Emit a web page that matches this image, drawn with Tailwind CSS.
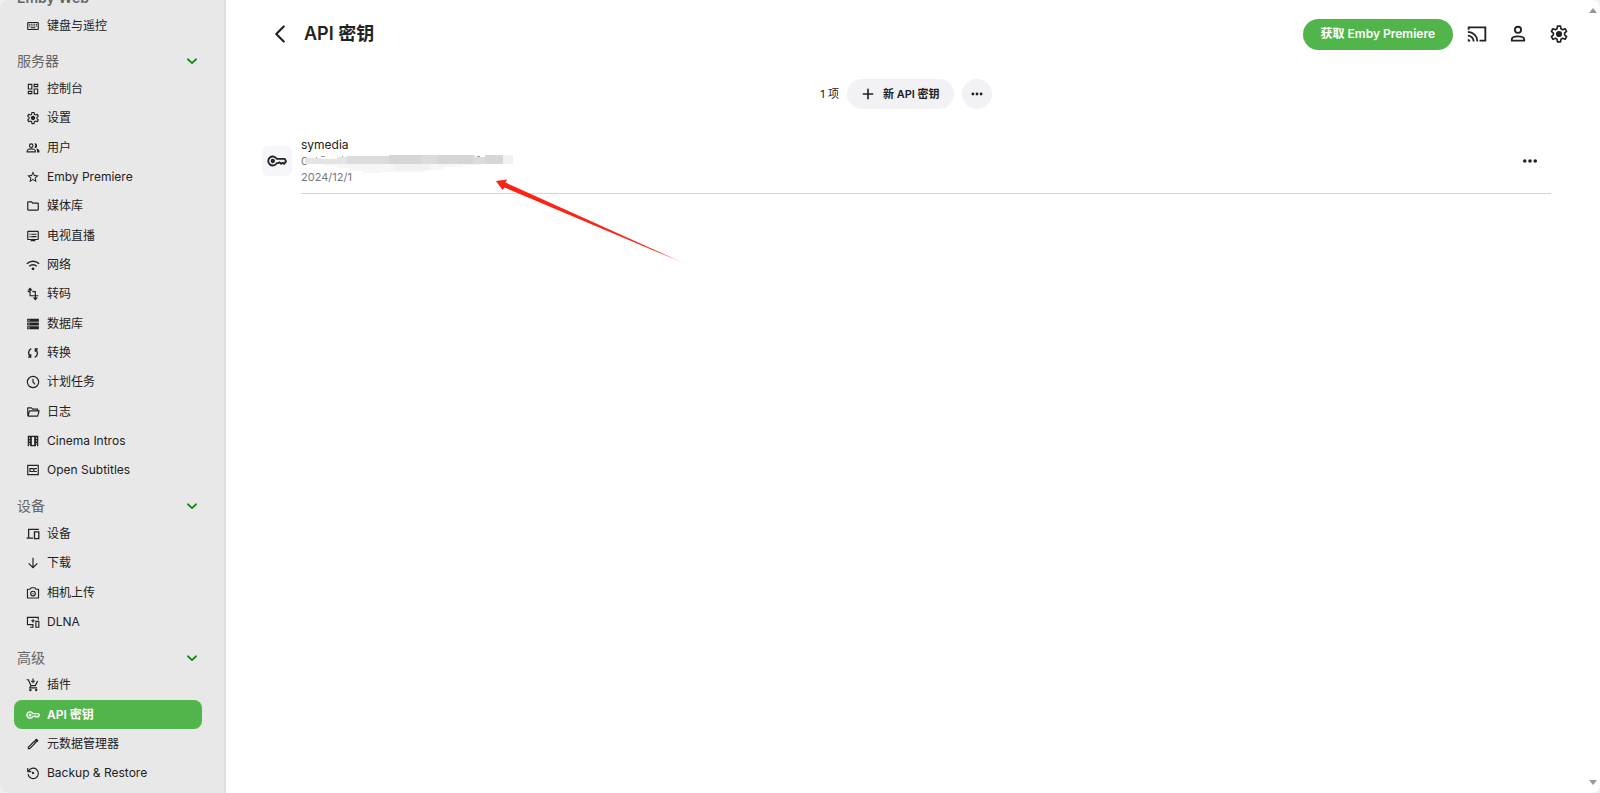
<!DOCTYPE html>
<html lang="zh-CN">
<head>
    <meta charset="UTF-8">
    <meta name="viewport" content="width=device-width, initial-scale=1.0">
    <title>API 密钥</title>
    <script src="https://cdn.jsdelivr.net/npm/@tailwindcss/browser@4"></script>
</head>
<body class="bg-[#f0f0f0] font-['Inter','Noto_Sans_CJK_SC',sans-serif] text-[#222]">

    <!-- Icons -->
    <svg class="hidden" xmlns="http://www.w3.org/2000/svg">
        <symbol id="keyboard" viewBox="0 0 24 24"><path d="M20 7v10H4V7h16m0-2H4c-1.1 0-1.99.9-1.99 2L2 17c0 1.1.9 2 2 2h16c1.1 0 2-.9 2-2V7c0-1.1-.9-2-2-2zm-9 3h2v2h-2zm0 3h2v2h-2zM8 8h2v2H8zm0 3h2v2H8zm-3 0h2v2H5zm0-3h2v2H5zm3 6h8v2H8zm6-3h2v2h-2zm0-3h2v2h-2zm3 3h2v2h-2zm0-3h2v2h-2z"/></symbol>
        <symbol id="dashboard" viewBox="0 0 24 24"><path d="M19 5v2h-4V5h4M9 5v6H5V5h4m10 8v6h-4v-6h4M9 17v2H5v-2h4M21 3h-8v6h8V3zM11 3H3v10h8V3zm10 8h-8v10h8V11zm-10 4H3v6h8v-6z"/></symbol>
        <symbol id="settings" viewBox="0 0 24 24"><path fill="none" stroke="currentColor" stroke-width="2" stroke-linejoin="round" d="M10.2 2.500h3.600l.6 3.200 1.900 1.100 3-1.100 1.800 3.100-2.400 2.200v2l2.400 2.200-1.800 3.100-3-1.100-1.900 1.100-.6 3.200h-3.600l-.6-3.200-1.900-1.100-3 1.100-1.800-3.100L5.300 13v-2L2.900 8.800l1.800-3.100 3 1.100 1.900-1.100z"/><circle cx="12" cy="12" r="3.700"/></symbol>
        <symbol id="people" viewBox="0 0 24 24"><g fill="none" stroke="currentColor" stroke-width="2"><circle cx="9" cy="8" r="3"/><path d="M2 18.500v-1.500c0-2.300 4.500-3.500 7-3.500s7 1.200 7 3.500v1.500z"/></g><path d="M14.500 4.200c2.500-.8 4.500 1.300 4.500 3.800s-2 4.600-4.500 3.800c1.800-2.300 1.800-5.300 0-7.600zM17 12.900c3 .6 6 2 6 4.100v2.500h-4V17c0-1.600-.8-3-2-4.100z"/></symbol>
        <symbol id="star" viewBox="0 0 24 24"><path d="M22 9.240l-7.190-.62L12 2 9.190 8.630 2 9.240l5.460 4.730L5.820 21 12 17.270 18.180 21l-1.630-7.030L22 9.240zM12 15.400l-3.760 2.270 1-4.280-3.320-2.880 4.380-.38L12 6.100l1.710 4.040 4.380.38-3.320 2.880 1 4.280L12 15.400z"/></symbol>
        <symbol id="folder" viewBox="0 0 24 24"><path d="M9.170 6l2 2H20v10H4V6h5.170M10 4H4c-1.100 0-1.990.9-1.990 2L2 18c0 1.100.9 2 2 2h16c1.100 0 2-.9 2-2V8c0-1.100-.9-2-2-2h-8l-2-2z"/></symbol>
        <symbol id="tv" viewBox="0 0 24 24"><path d="M20 3H4c-1.100 0-2 .9-2 2v12c0 1.100.9 2 2 2h4v2h8v-2h4c1.100 0 2-.9 2-2V5c0-1.100-.9-2-2-2zm0 14H4V5h16v12zm-2-9H9v2h9V8zm0 4H9v2h9v-2zM8 8H6v2h2V8zm0 4H6v2h2v-2z"/></symbol>
        <symbol id="wifi" viewBox="0 0 24 24"><path fill="none" stroke="currentColor" stroke-width="2.600" d="M1.500 9.800a15 15 0 0 1 21 0M5.600 14.200a9.200 9.200 0 0 1 12.800 0"/><circle cx="12" cy="18.500" r="2.400"/></symbol>
        <symbol id="transform" viewBox="0 0 24 24"><path fill="none" stroke="currentColor" stroke-width="2" d="M7 3v12h14M3 8h4M11 8h5v12"/><path d="M7 1l4.500 5h-9zM16 23l4.500-5h-9z"/></symbol>
        <symbol id="storage" viewBox="0 0 24 24"><path d="M2 21h20v-5H2v5zm2-3.500h2v2H4v-2zM2 3v5h20V3H2zm4 3.500H4v-2h2v2zm-4 8h20v-5H2v5zM4 11h2v2H4v-2z"/></symbol>
        <symbol id="sync" viewBox="0 0 24 24"><path fill="none" stroke="currentColor" stroke-width="2.400" d="M9 4.500C3.500 7 3 14 7.500 18.500M3.500 19H8v-5M15 19.500c5.500-2.500 6-9.500 1.500-14M20.500 5H16v5"/></symbol>
        <symbol id="clock" viewBox="0 0 24 24"><g fill="none" stroke="currentColor" stroke-width="2"><circle cx="12" cy="12" r="9.700"/><path d="M12 6.500V12l3.500 4"/></g></symbol>
        <symbol id="folder-open" viewBox="0 0 24 24"><path fill="none" stroke="currentColor" stroke-width="2" stroke-linejoin="round" d="M3 18.500V5h6.500l2 2H20v3M3.500 19 6 10h16.500L20 19z"/></symbol>
        <symbol id="film" viewBox="0 0 24 24"><path fill-rule="evenodd" d="M3 3h18v18h-2v-2h-2v2H7v-2H5v2H3zM5 6v2h2V6zm0 5v2h2v-2zm0 5v2h2v-2zM17 6v2h2V6zm0 5v2h2v-2zm0 5v2h2v-2zM10 5v14h4V5z"/></symbol>
        <symbol id="cc" viewBox="0 0 24 24"><path fill="none" stroke="currentColor" stroke-width="2" d="M3 4h18v16H3zM11 10.500V9.500H6.800v5H11v-1M17.500 10.500V9.500h-4.200v5h4.200v-1"/></symbol>
        <symbol id="devices" viewBox="0 0 24 24"><path fill="none" stroke="currentColor" stroke-width="2.200" d="M22 4H4.500v15M1 19h11M14.500 8.500H22V20h-7.500z"/></symbol>
        <symbol id="down" viewBox="0 0 24 24"><path fill="none" stroke="currentColor" stroke-width="2" d="M12 3v17M4.500 12.500 12 20l7.500-7.500"/></symbol>
        <symbol id="camera" viewBox="0 0 24 24"><g fill="none" stroke="currentColor" stroke-width="2"><path stroke-linejoin="round" d="M2.500 5.500H7l2-2.500h6l2 2.500h4.500v15h-19z"/><circle cx="12" cy="13" r="4"/></g><circle cx="12" cy="13" r="1.200"/></symbol>
        <symbol id="dlna" viewBox="0 0 24 24"><path fill="none" stroke="currentColor" stroke-width="2" d="M21 8V4H2.500v12.500H12M12 16v5M7 21h6M17 11h5v10h-5z"/><path d="m12 6 1.200 2.800 2.800 1.200-2.800 1.200L12 14l-1.200-2.800L8 10l2.800-1.200z"/></symbol>
        <symbol id="cart" viewBox="0 0 24 24"><path fill="none" stroke="currentColor" stroke-width="2" d="M1 3h3l4.500 10h7.500l4-8M8.500 13 6.500 17H19M12 1v8M8.500 5.500h7"/><circle cx="7.500" cy="20.500" r="2"/><circle cx="17.500" cy="20.500" r="2"/></symbol>
        <symbol id="key" viewBox="0 0 24 24"><g fill="none" stroke="currentColor" stroke-width="2.200" stroke-linejoin="round"><path d="M11.700 9.500A5.400 5.400 0 1 0 11.700 14.500h2.100l1.400-1 1.800 2 1.800-1.500 1.700 1.500 2.300-3-1.500-3z"/><circle cx="7" cy="12" r="1.500"/></g></symbol>
        <symbol id="pencil" viewBox="0 0 24 24"><path d="M14.060 9.020l.92.92L5.920 19H5v-.92l9.060-9.060M17.660 3c-.25 0-.51.1-.7.290l-1.830 1.830 3.750 3.750 1.830-1.830c.39-.39.39-1.020 0-1.410l-2.340-2.340c-.2-.2-.45-.290-.71-.290zm-3.600 3.190L3 17.250V21h3.750L17.810 9.940l-3.750-3.750z"/><path d="m17.700 3 3.500 3.500-3 3-3.700-3.700z"/></symbol>
        <symbol id="restore" viewBox="0 0 24 24"><path fill="none" stroke="currentColor" stroke-width="2" d="M3 3.500v6h6M4 9.500A8.900 8.900 0 1 1 3.500 14"/><circle cx="12" cy="12" r="2"/></symbol>
        <symbol id="chevron" viewBox="0 0 24 24"><path fill="none" stroke="currentColor" stroke-width="3" stroke-linecap="round" stroke-linejoin="round" d="m5 9 7 6.500L19 9"/></symbol>
        <symbol id="back" viewBox="0 0 24 24"><path fill="none" stroke="currentColor" stroke-width="2.600" stroke-linecap="round" stroke-linejoin="round" d="M16.500 3 7.500 12l9 9"/></symbol>
        <symbol id="cast" viewBox="0 0 24 24"><path fill="none" stroke="currentColor" stroke-width="2.200" d="M2 7V4h20v16h-7M1 9.500A11.500 11.500 0 0 1 12.500 21M1 14a7 7 0 0 1 7 7"/><path d="M1 18v3h3a3 3 0 0 0-3-3z"/></symbol>
        <symbol id="person" viewBox="0 0 24 24"><g fill="none" stroke="currentColor" stroke-width="2.200"><circle cx="12" cy="7" r="3.700"/><path stroke-linejoin="round" d="M4.500 20v-1.500c0-4.800 15-4.800 15 0V20z"/></g></symbol>
        <symbol id="plus" viewBox="0 0 24 24"><path fill="none" stroke="currentColor" stroke-width="2.800" stroke-linecap="round" d="M12 4v16M4 12h16"/></symbol>
        <symbol id="more" viewBox="0 0 24 24"><circle cx="5" cy="12" r="2.400"/><circle cx="12" cy="12" r="2.400"/><circle cx="19" cy="12" r="2.400"/></symbol>
    </svg>

    <div class="flex h-screen overflow-hidden rounded-lg bg-white">

        <!-- Sidebar -->
        <nav class="flex w-[226px] shrink-0 flex-col overflow-hidden border-r-2 border-[#dedede] bg-[#e8e8e8] pr-[22px] pb-[5px] pl-[14px] text-xs text-[#222] [&_a]:flex [&_a]:shrink-0 [&_a]:grow [&_a]:basis-[29px] [&_a]:items-center [&_a]:gap-[7px] [&_a]:rounded-lg [&_a]:pl-3 [&_a_svg]:size-[14px] [&_a_svg]:fill-current [&_h2]:flex [&_h2]:h-[34px] [&_h2]:shrink-0 [&_h2]:items-center [&_h2]:justify-between [&_h2]:pt-2 [&_h2]:pr-[3px] [&_h2]:pl-[3px] [&_h2]:text-sm [&_h2]:text-[#666] [&_h2_svg]:size-[14px] [&_h2_svg]:text-[#128a12]">
            <h2 class="-mt-[23px] font-semibold">Emby Web</h2>
            <a href="#"><svg><use href="#keyboard"/></svg>键盘与遥控</a>

            <h2>服务器 <svg><use href="#chevron"/></svg></h2>
            <a href="#"><svg><use href="#dashboard"/></svg>控制台</a>
            <a href="#"><svg><use href="#settings"/></svg>设置</a>
            <a href="#"><svg><use href="#people"/></svg>用户</a>
            <a href="#"><svg><use href="#star"/></svg>Emby Premiere</a>
            <a href="#"><svg><use href="#folder"/></svg>媒体库</a>
            <a href="#"><svg><use href="#tv"/></svg>电视直播</a>
            <a href="#"><svg><use href="#wifi"/></svg>网络</a>
            <a href="#"><svg><use href="#transform"/></svg>转码</a>
            <a href="#"><svg><use href="#storage"/></svg>数据库</a>
            <a href="#"><svg><use href="#sync"/></svg>转换</a>
            <a href="#"><svg><use href="#clock"/></svg>计划任务</a>
            <a href="#"><svg><use href="#folder-open"/></svg>日志</a>
            <a href="#"><svg><use href="#film"/></svg>Cinema Intros</a>
            <a href="#"><svg><use href="#cc"/></svg>Open Subtitles</a>

            <h2>设备 <svg><use href="#chevron"/></svg></h2>
            <a href="#"><svg><use href="#devices"/></svg>设备</a>
            <a href="#"><svg><use href="#down"/></svg>下载</a>
            <a href="#"><svg><use href="#camera"/></svg>相机上传</a>
            <a href="#"><svg><use href="#dlna"/></svg>DLNA</a>

            <h2>高级 <svg><use href="#chevron"/></svg></h2>
            <a href="#"><svg><use href="#cart"/></svg>插件</a>
            <a href="#" class="bg-[#52b54b] font-semibold text-white"><svg><use href="#key"/></svg>API 密钥</a>
            <a href="#"><svg><use href="#pencil"/></svg>元数据管理器</a>
            <a href="#"><svg><use href="#restore"/></svg>Backup &amp; Restore</a>
        </nav>

        <!-- Content -->
        <main class="min-w-0 flex-1">
            <header class="flex h-[68px] items-center pr-4 pl-11">
                <button class="flex size-5 items-center justify-center" aria-label="返回"><svg class="size-5 fill-current"><use href="#back"/></svg></button>
                <h1 class="ml-[14px] text-lg font-semibold">API 密钥</h1>
                <button class="ml-auto h-[31px] rounded-full bg-[#52b54b] px-[18px] text-xs font-semibold text-white">获取 Emby Premiere</button>
                <div class="ml-[14px] flex gap-[21px]">
                    <button class="size-5" aria-label="投放"><svg class="size-5 fill-current"><use href="#cast"/></svg></button>
                    <button class="size-5" aria-label="用户"><svg class="size-5 fill-current"><use href="#person"/></svg></button>
                    <button class="size-5" aria-label="设置"><svg class="size-5 fill-current"><use href="#settings"/></svg></button>
                </div>
            </header>

            <div class="mt-[11px] flex items-center justify-center gap-2 pl-px text-[11px]">
                <span>1 项</span>
                <button class="flex h-[30px] items-center gap-2 rounded-full bg-[#f1f1f6] px-[14px] font-semibold"><svg class="size-[14px] fill-current"><use href="#plus"/></svg>新 API 密钥</button>
                <button class="flex size-[30px] items-center justify-center rounded-full bg-[#f1f1f6]" aria-label="更多"><svg class="size-[14px] fill-current"><use href="#more"/></svg></button>
            </div>

            <div class="mt-[26px] flex items-start pr-[34px] pl-9">
                <div class="mt-[11px] flex size-[30px] shrink-0 items-center justify-center rounded-md bg-[#f6f6fa]"><svg class="size-5 fill-current"><use href="#key"/></svg></div>
                <div class="ml-[9px] flex flex-1 items-center justify-between border-b border-[#d6d6d6] pt-[2px] pb-2">
                    <div class="relative text-[11px] leading-4 text-[#777]">
                        <div class="text-xs leading-4 text-[#222]">symedia</div>
                        <div>0</div>
                        <div>2024/12/1</div>
                        <!-- Masked key -->
                        <svg class="absolute top-[18px] left-1 h-[18px] w-[208px]" viewBox="0 0 208 18">
                            <path fill="#f6f6f6" d="M20 9h155v1h-17v2h-20v3h-18v2H76v1H58v-2H44v-3H32v-2H20z"/>
                            <path fill="#f1f1f1" d="M90 9h34v6H90zM198 0h10v9h-10z"/>
                            <path fill="#e4e4e4" d="M0 3h16v1h16V2h10v7H0z"/>
                            <path fill="#dcdcdc" d="M42 1h42V0h86v2h10V0h18v9H42z"/>
                            <path fill="#d6d6d6" d="M84 0h32v9H84zM132 0h36v9h-36zM180 0h18v9h-18z"/>
                            <path fill="#999" d="M11 2h1v1h-1zM16 1h4v1h-4zM37 1h1v1h-1zM172 1h3v1h-3z"/>
                        </svg>
                    </div>
                    <button class="mr-3 flex size-[18px]" aria-label="更多"><svg class="size-[18px] fill-current"><use href="#more"/></svg></button>
                </div>
            </div>
        </main>

        <!-- Scrollbar -->
        <div class="flex w-[15px] shrink-0 flex-col items-center justify-between py-2 text-[#999]">
            <svg class="h-[5px] w-2 fill-current" viewBox="0 0 8 5"><path d="M0 5 4 0l4 5z"/></svg>
            <svg class="h-[5px] w-2 fill-current" viewBox="0 0 8 5"><path d="M0 0h8L4 5z"/></svg>
        </div>
    </div>

    <!-- Arrow annotation -->
    <svg class="pointer-events-none absolute top-[178px] left-[494px] h-[90px] w-[194px]" viewBox="0 0 194 90">
        <defs>
            <linearGradient id="fade" x1="0" x2="1">
                <stop offset=".85" stop-color="#fb2314"/>
                <stop offset="1" stop-color="#fb2314" stop-opacity="0"/>
            </linearGradient>
        </defs>
        <path fill="url(#fade)" d="M2 3 13 1.500 11.500 4.500 194 87 10.500 9.500 8.500 12z"/>
    </svg>
</body>
</html>
